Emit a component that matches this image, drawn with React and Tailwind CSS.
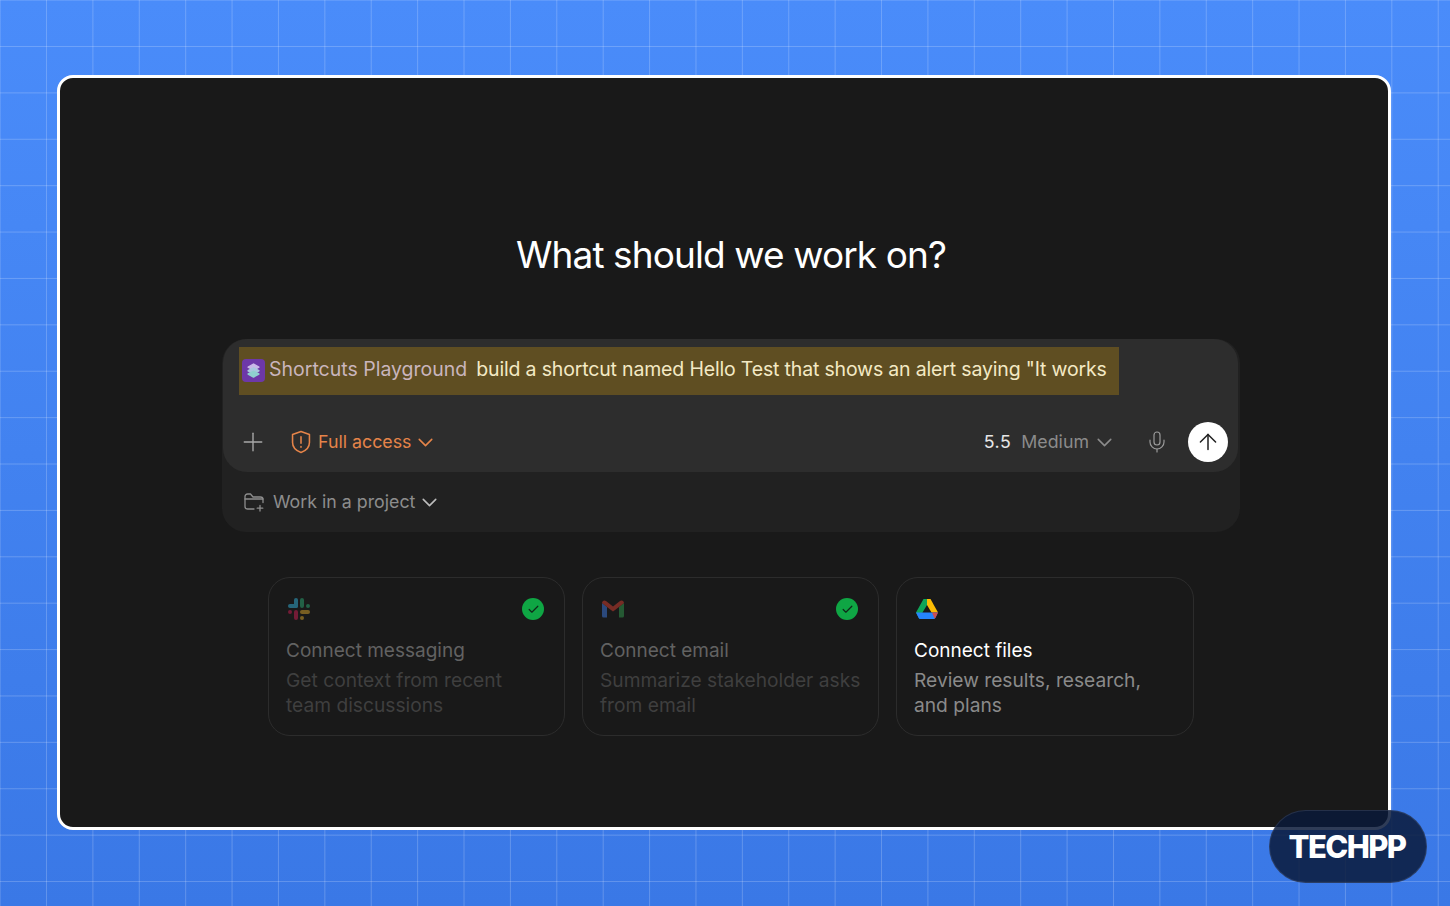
import React from "react";
import { Plus, ChevronDown, Mic, ArrowUp, Check } from "lucide-react";

function SlackLogo() {
  return (
    <svg width="24" height="24" viewBox="0 0 24 24" className="opacity-45">
      <rect x="7" y="1" width="4" height="10" rx="2" fill="#36c5f0" />
      <rect x="1" y="7" width="10" height="4" rx="2" fill="#36c5f0" />
      <rect x="13" y="1" width="4" height="10" rx="2" fill="#2eb67d" />
      <rect x="19" y="7" width="4" height="4" rx="2" fill="#2eb67d" />
      <rect x="7" y="13" width="4" height="10" rx="2" fill="#e01e5a" />
      <rect x="1" y="13" width="4" height="4" rx="2" fill="#e01e5a" />
      <rect x="13" y="13" width="10" height="4" rx="2" fill="#ecb22e" />
      <rect x="13" y="19" width="4" height="4" rx="2" fill="#ecb22e" />
    </svg>
  );
}

function GmailLogo() {
  return (
    <svg width="24" height="24" viewBox="0 0 24 24" className="opacity-45">
      <path d="M1 6v13a1.500 1.500 0 0 0 1.500 1.500H6V10z" fill="#4285f4" />
      <path d="M18 10v10.500h3.500A1.500 1.500 0 0 0 23 19V6z" fill="#34a853" />
      <path d="M1 6a2.500 2.500 0 0 1 4-2l7 5.500L19 4a2.500 2.500 0 0 1 4 2l-5 4-6 4.500L6 10z" fill="#ea4335" />
    </svg>
  );
}

function DriveLogo() {
  return (
    <svg width="24" height="24" viewBox="0 0 24 24">
      <path d="M8.500 2H12v6l-4.500 7.500L4.500 22 1 15.500z" fill="#0fa558" />
      <path d="M12 2h3.500L23 15.500h-6.500L12 8z" fill="#fbbc04" />
      <path d="M1 15.500h22l-2.500 5.200a2 2 0 0 1-1.800 1.300H5.300a2 2 0 0 1-1.800-1.300z" fill="#2684fc" />
      <path d="M23 15.500l-2.500 5.200-1 .8-2.500-6z" fill="#ea4335" opacity="0.85" />
    </svg>
  );
}

function ShortcutsIcon() {
  return (
    <span className="flex h-[23px] w-[23px] items-center justify-center rounded-[4px] bg-[#6d38a8]">
      <svg width="17" height="17" viewBox="0 0 16 16" strokeWidth="1.500" strokeLinejoin="round">
        <path d="M8 2l5 2.800-5 2.800-5-2.800z" fill="#c9b8e8" stroke="#c9b8e8" />
        <path d="M8 5.500l5 2.800-5 2.800-5-2.800z" fill="#a9c8de" stroke="#a9c8de" />
        <path d="M8 8.800l5 2.500-5 2.800-5-2.800z" fill="#8fd0cf" stroke="#8fd0cf" />
      </svg>
    </span>
  );
}

function FolderAdd() {
  return (
    <svg width="22" height="22" viewBox="0 0 22 22" fill="none" stroke="#8d8d8d" strokeWidth="1.300" strokeLinecap="round" strokeLinejoin="round">
      <path d="M11 18H4.500A2.500 2.500 0 0 1 2 15.500V5.500A2.500 2.500 0 0 1 4.500 3h3l2.500 3h7.500A2.500 2.500 0 0 1 20 8.500v3" />
      <path d="M2 8h18M17 14.500v5.500M14.200 17.200h5.600" />
    </svg>
  );
}

function ConnectCard({ logo, title, desc, connected, width }) {
  return (
    <div className={`flex h-[159px] flex-col rounded-[22px] border border-[#2c2c2c] pl-[17px] pr-[20px] pt-[19px] ${width}`}>
      <div className="flex h-[24px] items-center justify-between pl-[1px]">
        {logo}
        {connected && (
          <span className="flex h-[22px] w-[22px] items-center justify-center rounded-full bg-[#0fa644]">
            <Check size={13} strokeWidth={2.2} className="text-[#10291a]" />
          </span>
        )}
      </div>
      <div className={`mt-[17px] whitespace-nowrap text-[19px] leading-[26px] ${connected ? "text-[#626262]" : "text-white"}`}>{title}</div>
      <div className={`mt-[4px] whitespace-nowrap text-[19.200px] leading-[25px] ${connected ? "text-[#3f3f3f]" : "text-[#8a8a8a]"}`}>{desc}</div>
    </div>
  );
}

export default function App() {
  return (
    <div className="relative h-[906px] w-[1450px] overflow-hidden bg-[linear-gradient(180deg,#4a8cfa_0%,#3a78e6_100%)] font-['Inter',sans-serif]">
      <div className="absolute inset-0 bg-[linear-gradient(to_right,rgba(255,255,255,0.2)_1px,transparent_1px),linear-gradient(to_bottom,rgba(255,255,255,0.2)_1px,transparent_1px)] bg-[size:46.400px_46.400px] bg-[position:46px_46px]"></div>

      <div className="relative ml-[57px] pt-[75px]">
        <div className="box-border flex h-[755px] w-[1334px] flex-col items-center rounded-[16px] border-[3px] border-white bg-[#191919] pl-[14px]">
          <h1 className="mt-[153px] text-[37px] font-normal leading-[48px] tracking-[-0.9px] text-white">What should we work on?</h1>

          <div className="mt-[60px] w-[1018px] rounded-[24px] bg-[#212121]">
            <div className="ml-[1px] flex h-[133px] w-[1015px] flex-col rounded-[24px] bg-[#2d2d2d] pl-[16px] pr-[10px]">
              <div className="mt-[8px] flex h-[48px] w-[880px] items-center bg-[#5f4e22] pb-[2px] pl-[3px] text-[19.500px]">
                <ShortcutsIcon />
                <span className="ml-[4px] text-[#c9b5bd]">Shortcuts Playground</span>
                <span className="ml-[9px] tracking-[-0.17px] text-[#f3e9c4]">build a shortcut named Hello Test that shows an alert saying "It works</span>
              </div>
              <div className="mt-[27px] flex items-center text-[17.800px]">
                <Plus size={30} strokeWidth={1.1} className="-ml-[1px] text-[#a8a8a8]" />
                <svg width="26" height="26" viewBox="0 0 20 20" fill="none" stroke="#e58449" strokeWidth="1.200" className="ml-[20px]">
                  <path d="M10 2l6.500 2.300v6c0 3.700-2.700 6.300-6.500 7.700-3.800-1.400-6.500-4-6.500-7.700v-6z" strokeLinejoin="round" />
                  <path d="M10 6v5M10 13.500v.6" strokeLinecap="round" />
                </svg>
                <span className="ml-[4px] pt-[1px] text-[#e58449]">Full access</span>
                <ChevronDown size={25} strokeWidth={1.5} className="ml-[2px] text-[#e58449]" />
                <span className="ml-auto pt-[1px] tracking-[0.5px] text-[#e6e6e6]">5.5</span>
                <span className="ml-[10px] pt-[1px] text-[#8b8b8b]">Medium</span>
                <ChevronDown size={25} strokeWidth={1.5} className="ml-[3px] text-[#8b8b8b]" />
                <Mic size={24} strokeWidth={1.2} className="ml-[28px] text-[#9a9a9a]" />
                <span className="ml-[19px] flex h-[40px] w-[40px] items-center justify-center rounded-full bg-white">
                  <ArrowUp size={26} strokeWidth={1.4} className="text-[#222]" />
                </span>
              </div>
            </div>
            <div className="flex h-[60px] items-center pl-[21px] text-[17.800px] text-[#8d8d8d]">
              <FolderAdd />
              <span className="ml-[8px] pt-[1px]">Work in a project</span>
              <ChevronDown size={25} strokeWidth={1.5} className="ml-[2px] text-[#bdbdbd]" />
            </div>
          </div>

          <div className="mt-[45px] flex gap-[17px]">
            <ConnectCard logo={<SlackLogo />} title="Connect messaging" desc={<>Get context from recent<br />team discussions</>} connected width="w-[297px]" />
            <ConnectCard logo={<GmailLogo />} title="Connect email" desc={<>Summarize stakeholder asks<br />from email</>} connected width="w-[297px]" />
            <ConnectCard logo={<DriveLogo />} title="Connect files" desc={<>Review results, research,<br />and plans</>} width="w-[298px]" />
          </div>
        </div>
      </div>

      <div className="absolute left-[1269px] top-[810px] flex h-[73px] w-[158px] items-center justify-center rounded-full border border-white/10 bg-[#0b1a3a]/85 pr-[2px] pt-[1px] text-[31px] font-extrabold tracking-[-1.6px] text-white">
        TECHPP
      </div>
    </div>
  );
}
